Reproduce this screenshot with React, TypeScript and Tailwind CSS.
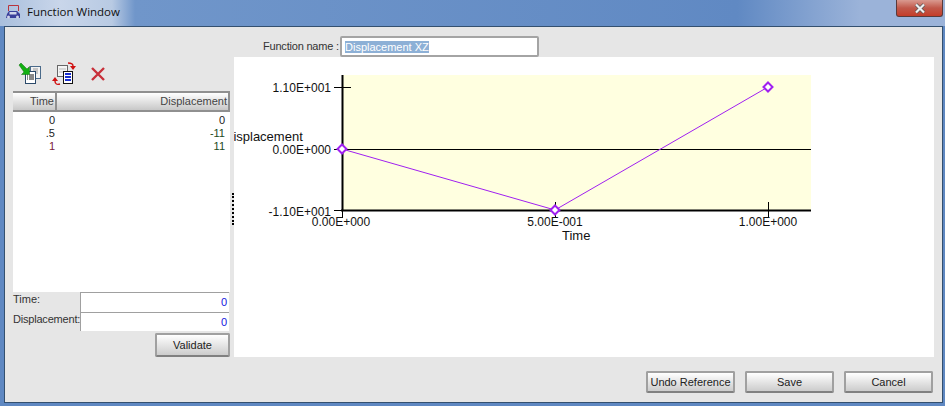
import React from 'react';

const rows = [
  { time: '0', value: '0', timeClass: 'text-[#222]', valueClass: 'text-[#222]' },
  { time: '.5', value: '-11', timeClass: 'text-[#222]', valueClass: 'text-[#224a22]' },
  { time: '1', value: '11', timeClass: 'text-[#7a1a3a]', valueClass: 'text-[#224a22]' },
];

const btn =
  'rounded-[2px] border-2 border-[#a0a0a0] border-b-[#808080] bg-gradient-to-b from-[#ffffff] to-[#cccccc] text-[11px] text-[#222] whitespace-nowrap';

const ImportIcon = () => (
  <svg width="24" height="24" viewBox="0 0 24 24">
    <rect x="12.5" y="4.5" width="10" height="12" fill="#f2f2f2" stroke="#4a6a8a" />
    <path d="M15 7h5M15 9h5M15 11h5" stroke="#999" />
    <rect x="7.5" y="9.5" width="10" height="12" fill="#fff" stroke="#2b4a6a" />
    <path d="M9 13h1M11 13h5M9 15h1M11 15h5M9 17h1M11 17h5" stroke="#111" />
    <path d="M1 3l2-2 6 6 2.5-2.5v8h-8l2.5-2.5z" fill="#12b012" stroke="#0a6a0a" strokeWidth="0.5" />
  </svg>
);

const SwapIcon = () => (
  <svg width="24" height="25" viewBox="0 0 24 25">
    <rect x="5.5" y="4.5" width="10" height="11" fill="#f4f4f4" stroke="#666" />
    <path d="M7 8h7M7 11h7" stroke="#bbb" />
    <rect x="11.5" y="10.5" width="9" height="12" fill="#fff" stroke="#111" />
    <path d="M13 13h6M13 16h6M13 19h6" stroke="#1a2fd0" strokeWidth="2" />
    <path d="M16 2c3 0 5 1 5 3" fill="none" stroke="#d01010" strokeWidth="1.4" />
    <path d="M18 5h6l-3 4z" fill="#d01010" />
    <path d="M8 23c-3 1-5 0-5-3" fill="none" stroke="#d01010" strokeWidth="1.4" />
    <path d="M0 20h6l-3-4z" fill="#d01010" />
  </svg>
);

const DeleteIcon = () => (
  <svg width="14" height="14" viewBox="0 0 14 14">
    <path d="M1 1l12 12M13 1L1 13" stroke="#c8303a" strokeWidth="2.4" />
  </svg>
);

const AppIcon = () => (
  <svg width="16" height="16" viewBox="0 0 16 16">
    <path d="M3.5 7V1.5h10V7" fill="none" stroke="#b8343c" />
    <path d="M1 14l1-4 2-3h8l3 3v4z" fill="#3a3f9a" />
    <rect x="4.5" y="8" width="7" height="2.5" fill="#cfd4ea" />
    <circle cx="3.5" cy="13" r="1.5" fill="#d0d4ea" />
    <circle cx="12.5" cy="13" r="1.5" fill="#d0d4ea" />
  </svg>
);

const Chart = () => {
  const diamond = (x: number, y: number) => `${x},${y - 4.5} ${x + 4.5},${y} ${x},${y + 4.5} ${x - 4.5},${y}`;
  const labelClass = 'fill-[#111] text-[12px]';
  const titleClass = 'fill-[#111] text-[13px]';
  return (
    <svg width="700" height="300" viewBox="234 57 700 300" className="block">
      <rect x="342" y="75" width="469" height="135" fill="#ffffe0" />
      <path d="M334 87.5h17M334 149.5h477M334 210.5h8" stroke="#000" fill="none" />
      <path d="M342.5 210v8M555.5 202v16M768.5 202v16" stroke="#000" fill="none" />
      <path d="M342.5 75v136M341 210.5h470" stroke="#000" strokeWidth="2" fill="none" />
      <polyline points="342,149 555,210 768,87" fill="none" stroke="#a020f0" />
      {[[342, 149], [555, 210], [768, 87]].map(([x, y]) => (
        <polygon key={x} points={diamond(x, y)} fill="#fff" stroke="#a020f0" strokeWidth="2" />
      ))}
      <text x="331" y="92" textAnchor="end" className={labelClass}>1.10E+001</text>
      <text x="331" y="154" textAnchor="end" className={labelClass}>0.00E+000</text>
      <text x="331" y="216" textAnchor="end" className={labelClass}>-1.10E+001</text>
      <text x="224" y="141" className={titleClass}>Displacement</text>
      <text x="341" y="226" textAnchor="middle" className={labelClass}>0.00E+000</text>
      <text x="555" y="226" textAnchor="middle" className={labelClass}>5.00E-001</text>
      <text x="768" y="226" textAnchor="middle" className={labelClass}>1.00E+000</text>
      <text x="562" y="240" className={titleClass}>Time</text>
    </svg>
  );
};

export default function App() {
  return (
    <div className="w-[945px] h-[406px] overflow-hidden flex flex-col bg-[#5f88c2] font-['Liberation_Sans',sans-serif] text-[11px] text-[#333]">
      {/* Title bar */}
      <div className="h-[26px] shrink-0 flex items-start justify-between bg-[linear-gradient(90deg,#a9bfdd_0%,#c9d6ea_60px,#b8cae3_112px,#7096ca_135px,#6089c3_78%,#9bb3d9_91%,#9bb3d9_100%)]">
        <div className="flex items-center gap-[6px] h-[24px] pl-[5px]">
          <AppIcon />
          <span className="font-['Open_Sans',sans-serif] text-[11.5px] text-[#111]">Function Window</span>
        </div>
        <div className="w-[47px] h-[17px] mr-[2px] flex items-center justify-center rounded-b-[3px] border border-t-0 border-[#5a3a3a] bg-gradient-to-b from-[#d99a90] via-[#c0584a] to-[#c43c28]">
          <svg width="14" height="11" viewBox="0 0 14 11">
            <path d="M3 1.5l8 8M11 1.5l-8 8" stroke="#555" strokeWidth="3.6" />
            <path d="M3 1.5l8 8M11 1.5l-8 8" stroke="#f0f0f0" strokeWidth="2.2" />
          </svg>
        </div>
      </div>

      {/* Window body */}
      <div className="flex-1 ml-[4px] mr-[2px] mb-[3px] border border-[#34506f] bg-[#e6e6e6] flex flex-col">
        <div className="flex pt-[9px] pl-[8px]">
          {/* Left column */}
          <div className="w-[217px] shrink-0 pt-[25px] flex flex-col">
            <div className="h-[30px] flex items-start pl-[5px]">
              <div className="mt-[1px]"><ImportIcon /></div>
              <div className="ml-[10px]"><SwapIcon /></div>
              <div className="ml-[15px] mt-[6px]"><DeleteIcon /></div>
            </div>
            <div className="h-[21px] flex border-y-2 border-[#909090] bg-gradient-to-b from-[#ffffff] to-[#c8c8c8] leading-[17px] text-[#444]">
              <div className="w-[44px] text-right pr-px border-r-2 border-[#909090]">Time</div>
              <div className="flex-1 text-right pr-px border-r-2 border-[#909090]">Displacement</div>
            </div>
            <div className="h-[180px] bg-white pt-[2px]">
              {rows.map((r) => (
                <div key={r.time} className="flex h-[13px] leading-[13px]">
                  <div className={`w-[42px] text-right ${r.timeClass}`}>{r.time}</div>
                  <div className={`flex-1 text-right pr-[5px] ${r.valueClass}`}>{r.value}</div>
                </div>
              ))}
            </div>
            <div className="flex h-[20px]">
              <div className="w-[67px] leading-[14px]">Time:</div>
              <div className="flex-1 mr-px bg-white border-l border-t border-[#a0a0a0] text-right pr-[2px] leading-[19px] text-[#1414e0]">0</div>
            </div>
            <div className="flex h-[19px]">
              <div className="w-[67px] leading-[14px] whitespace-nowrap tracking-[-0.2px]">Displacement:</div>
              <div className="flex-1 mr-px bg-white border-l border-t border-[#a0a0a0] text-right pr-[2px] leading-[19px] text-[#1414e0]">0</div>
            </div>
            <div className="flex justify-end mt-[2px]">
              <button className={`${btn} w-[75px] h-[24px]`}>Validate</button>
            </div>
          </div>

          {/* Splitter grip */}
          <div className="w-[4px] shrink-0 pt-[157px]">
            <div className="ml-[2px] h-[32px] border-l-2 border-dotted border-black" />
          </div>

          {/* Right column */}
          <div className="w-[700px] flex flex-col">
            <div className="h-[21px] flex items-center pl-[29px]">
              <span className="w-[77px] whitespace-nowrap tracking-[-0.2px]">Function name :</span>
              <div className="w-[199px] h-[21px] border-2 border-[#a4a4a4] rounded-[2px] bg-white flex items-center pl-[3px]">
                <span className="bg-[#8db0d6] text-white leading-[12px]">Displacement XZ</span>
              </div>
            </div>
            <div className="bg-white h-[300px]">
              <Chart />
            </div>
          </div>
        </div>

        {/* Footer buttons */}
        <div className="flex justify-end gap-[10px] pr-[9px] mt-[14px]">
          <button className={`${btn} w-[89px] h-[22px]`}>Undo Reference</button>
          <button className={`${btn} w-[89px] h-[22px]`}>Save</button>
          <button className={`${btn} w-[89px] h-[22px]`}>Cancel</button>
        </div>
      </div>
    </div>
  );
}
